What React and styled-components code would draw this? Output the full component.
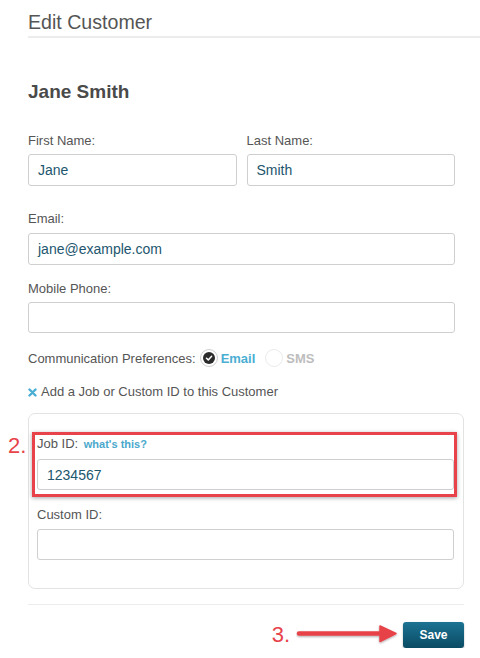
import React from 'react';
import styled, { createGlobalStyle } from 'styled-components';

const Global = createGlobalStyle`
  body {
    margin: 0;
    background: #fff;
    font-family: "Liberation Sans", Arial, sans-serif;
  }
`

const Page = styled.div`
  padding-left: 28px;
  width: 452px;
`
const Header = styled.div`
  padding-top: 8px;
  border-bottom: 2px solid #ececec;
`
const Title = styled.h1`
  margin: 0;
  font-size: 19.6px;
  font-weight: normal;
  line-height: 28px;
  color: #555;
`
const Form = styled.div`
  padding-right: 16px;
`
const Name = styled.h2`
  margin: 42px 0 0;
  font-size: 19px;
  line-height: 24px;
  font-weight: bold;
  color: #4a4a4a;
`
const Row = styled.div`
  display: grid;
  grid-template-columns: 1fr 1fr;
  gap: 10px;
  margin-right: 9px;
  margin-top: ${p => p.top || 0}px;
`
const Field = styled.div`
  margin-top: ${p => p.top || 0}px;
  margin-right: ${p => p.right || 0}px;
`
const Label = styled.div`
  font-size: 13px;
  line-height: 16px;
  color: #555;
  margin-bottom: ${p => p.gap || 5}px;
`
const Hint = styled.span`
  font-size: 11px;
  font-weight: bold;
  color: #4aa8cc;
  margin-left: 2px;
`
const Input = styled.div`
  box-sizing: border-box;
  height: ${p => p.h || 32}px;
  border: 1px solid #cfcfcf;
  border-radius: 3px;
  padding-left: 9px;
  display: flex;
  align-items: center;
  font-size: 14px;
  color: #22566e;
  background: #fff;
`
const Prefs = styled.div`
  display: flex;
  align-items: center;
  margin-top: 15px;
  height: 20px;
  font-size: 13px;
  color: #555;
`
const Radio = styled.span`
  box-sizing: border-box;
  width: 18px;
  height: 18px;
  border-radius: 50%;
  border: 1px solid ${p => (p.on ? '#cfcfcf' : '#ebebeb')};
  display: inline-flex;
  align-items: center;
  justify-content: center;
  margin: 0 3px 0 ${p => p.space}px;
`
const Dot = styled.span`
  width: 12px;
  height: 12px;
  border-radius: 50%;
  background: #2b2b2b;
  display: flex;
  align-items: center;
  justify-content: center;
`
const Option = styled.span`
  font-weight: bold;
  color: ${p => (p.on ? '#4aaed3' : '#bdbdbd')};
`
const AddLink = styled.div`
  display: flex;
  align-items: center;
  gap: 4px;
  margin-top: 16px;
  font-size: 13px;
  line-height: 16px;
  color: #555;
`
const Panel = styled.div`
  margin-top: 13px;
  border: 1px solid #e3e3e3;
  border-radius: 7px;
  padding: 22px 9px 28px 8px;
`
const Highlight = styled.div`
  position: relative;
  &::after {
    content: '';
    position: absolute;
    top: -4px;
    left: -5px;
    right: -3px;
    bottom: -7px;
    border: 3px solid #e8434a;
    box-shadow: 0 1px 4px rgba(0, 0, 0, 0.35);
    pointer-events: none;
  }
`
const Step = styled.span`
  position: absolute;
  font-size: 22px;
  line-height: 22px;
  color: #e8434a;
  left: ${p => p.left}px;
  top: ${p => p.top}px;
`
const Divider = styled.div`
  margin-top: 15px;
  border-top: 1px solid #ececec;
`
const Footer = styled.div`
  display: flex;
  justify-content: flex-end;
  align-items: center;
  margin-top: 17px;
`
const StepText = styled.span`
  font-size: 22px;
  line-height: 22px;
  color: #e8434a;
  margin-right: 6px;
`
const SaveButton = styled.button`
  width: 61px;
  height: 26px;
  border: none;
  border-radius: 3px;
  background: linear-gradient(#1c7393, #0a4b63);
  box-shadow: 0 1px 2px rgba(0, 0, 0, 0.3);
  color: #fff;
  font-family: "Liberation Sans", Arial, sans-serif;
  font-weight: bold;
  font-size: 12px;
  margin-left: 3px;
`

const Check = () => (
  <svg width="8" height="8" viewBox="0 0 8 8">
    <path d="M1.5 4.2 L3.3 5.9 L6.6 2.3" fill="none" stroke="#fff" strokeWidth="1.5" strokeLinecap="round" strokeLinejoin="round" />
  </svg>
)

const Cross = () => (
  <svg width="9" height="9" viewBox="0 0 9 9">
    <path d="M1.5 1.5 L7.5 7.5 M7.5 1.5 L1.5 7.5" stroke="#4aaed3" strokeWidth="2.4" strokeLinecap="round" />
  </svg>
)

const Arrow = () => (
  <svg width="104" height="22" viewBox="0 0 104 22">
    <defs>
      <filter id="sh" x="-10%" y="-40%" width="120%" height="180%">
        <feDropShadow dx="0" dy="1" stdDeviation="1" floodColor="#000" floodOpacity="0.35" />
      </filter>
    </defs>
    <g filter="url(#sh)">
      <path d="M3 9.5 H86" stroke="#e8434a" strokeWidth="4.5" strokeLinecap="round" />
      <path d="M84 2 L100 9.5 L84 17.5 Z" fill="#e8434a" stroke="#e8434a" strokeWidth="1.5" strokeLinejoin="round" />
    </g>
  </svg>
)

export default function App() {
  return (
    <>
      <Global />
      <Page>
        <Header>
          <Title>Edit Customer</Title>
        </Header>
        <Form>
          <Name>Jane Smith</Name>
          <Row top={29}>
            <div>
              <Label>First Name:</Label>
              <Input>Jane</Input>
            </div>
            <div>
              <Label>Last Name:</Label>
              <Input>Smith</Input>
            </div>
          </Row>
          <Field top={25} right={9}>
            <Label gap={6}>Email:</Label>
            <Input>jane@example.com</Input>
          </Field>
          <Field top={16} right={9}>
            <Label>Mobile Phone:</Label>
            <Input h={31} />
          </Field>
          <Prefs>
            Communication Preferences:
            <Radio on space={4}>
              <Dot><Check /></Dot>
            </Radio>
            <Option on>Email</Option>
            <Radio space={10} />
            <Option>SMS</Option>
          </Prefs>
          <AddLink>
            <Cross />
            Add a Job or Custom ID to this Customer
          </AddLink>
          <Panel>
            <Highlight>
              <Step left={-29} top={-1}>2.</Step>
              <Label gap={7}>
                Job ID: <Hint>what's this?</Hint>
              </Label>
              <Input h={31}>1234567</Input>
            </Highlight>
            <Field top={17}>
              <Label gap={6}>Custom ID:</Label>
              <Input h={31} />
            </Field>
          </Panel>
          <Divider />
          <Footer>
            <StepText>3.</StepText>
            <Arrow />
            <SaveButton>Save</SaveButton>
          </Footer>
        </Form>
      </Page>
    </>
  );
}
